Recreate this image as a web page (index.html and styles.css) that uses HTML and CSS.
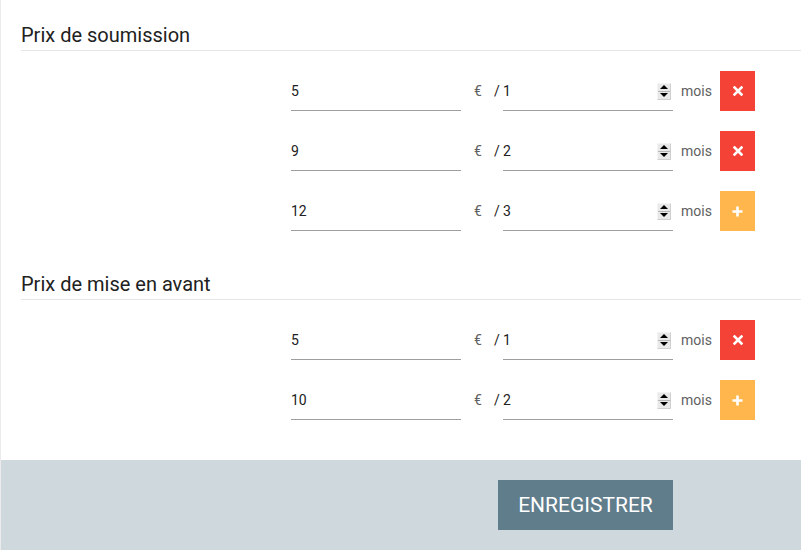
FILE: index.html
```html
<!DOCTYPE html>
<html lang="fr">
<head>
<meta charset="utf-8">
<link rel="stylesheet" href="styles.css">
</head>
<body>
<div class="page">
  <section class="section">
    <h2 class="section-title">Prix de soumission</h2>
    <div class="row">
      <div class="field"><input class="field-input" type="text" value="5"></div>
      <span class="currency">€</span>
      <span class="slash">/</span>
      <div class="field"><input class="field-input" type="text" value="1"><span class="spin"><span class="spin-up"></span><span class="spin-down"></span></span></div>
      <span class="unit">mois</span>
      <button class="btn-icon btn-remove" type="button"><svg width="10" height="10" viewBox="0 0 10 10"><path d="M1.5 1.5 8.5 8.5M8.5 1.5 1.5 8.5" stroke="#fff" stroke-width="2.6" stroke-linecap="square"/></svg></button>
    </div>
    <div class="row">
      <div class="field"><input class="field-input" type="text" value="9"></div>
      <span class="currency">€</span>
      <span class="slash">/</span>
      <div class="field"><input class="field-input" type="text" value="2"><span class="spin"><span class="spin-up"></span><span class="spin-down"></span></span></div>
      <span class="unit">mois</span>
      <button class="btn-icon btn-remove" type="button"><svg width="10" height="10" viewBox="0 0 10 10"><path d="M1.5 1.5 8.5 8.5M8.5 1.5 1.5 8.5" stroke="#fff" stroke-width="2.6" stroke-linecap="square"/></svg></button>
    </div>
    <div class="row">
      <div class="field"><input class="field-input" type="text" value="12"></div>
      <span class="currency">€</span>
      <span class="slash">/</span>
      <div class="field"><input class="field-input" type="text" value="3"><span class="spin"><span class="spin-up"></span><span class="spin-down"></span></span></div>
      <span class="unit">mois</span>
      <button class="btn-icon btn-add" type="button"><svg width="11" height="11" viewBox="0 0 11 11"><path d="M5.5 0.5V10.5M0.5 5.5H10.5" stroke="#fff" stroke-width="2.6"/></svg></button>
    </div>
  </section>
  <section class="section">
    <h2 class="section-title">Prix de mise en avant</h2>
    <div class="row">
      <div class="field"><input class="field-input" type="text" value="5"></div>
      <span class="currency">€</span>
      <span class="slash">/</span>
      <div class="field"><input class="field-input" type="text" value="1"><span class="spin"><span class="spin-up"></span><span class="spin-down"></span></span></div>
      <span class="unit">mois</span>
      <button class="btn-icon btn-remove" type="button"><svg width="10" height="10" viewBox="0 0 10 10"><path d="M1.5 1.5 8.5 8.5M8.5 1.5 1.5 8.5" stroke="#fff" stroke-width="2.6" stroke-linecap="square"/></svg></button>
    </div>
    <div class="row">
      <div class="field"><input class="field-input" type="text" value="10"></div>
      <span class="currency">€</span>
      <span class="slash">/</span>
      <div class="field"><input class="field-input" type="text" value="2"><span class="spin"><span class="spin-up"></span><span class="spin-down"></span></span></div>
      <span class="unit">mois</span>
      <button class="btn-icon btn-add" type="button"><svg width="11" height="11" viewBox="0 0 11 11"><path d="M5.5 0.5V10.5M0.5 5.5H10.5" stroke="#fff" stroke-width="2.6"/></svg></button>
    </div>
  </section>
  <footer class="footer">
    <button class="btn-save" type="button">ENREGISTRER</button>
  </footer>
</div>
</body>
</html>
```

FILE: styles.css
```css
* { box-sizing: border-box; }
html, body { margin: 0; padding: 0; background: #fff; }
body { font-family: Roboto, "Liberation Sans", sans-serif; color: #212121; }

.page {
  border-left: 1px solid #ebebeb;
  min-height: 550px;
  display: flex;
  flex-direction: column;
}

.section { padding-left: 20px; }
.section + .section { margin-top: 18px; }

.section-title {
  margin: 0;
  height: 51px;
  padding-top: 23px;
  font-size: 20px;
  line-height: 24px;
  font-weight: 400;
  color: #212121;
  border-bottom: 1px solid #e6e6e6;
}

.row {
  display: flex;
  align-items: stretch;
  height: 40px;
  margin-top: 20px;
  padding-left: 270px;
}

.field {
  width: 170px;
  display: flex;
  align-items: center;
  border-bottom: 1px solid #9e9e9e;
}
.field-input {
  border: 0;
  outline: 0;
  padding: 0;
  margin: 0;
  width: 100%;
  font-family: Roboto, "Liberation Sans", sans-serif;
  font-size: 14px;
  color: #212121;
  background: transparent;
  height: 20px;
  margin-top: 1px;
}

.currency {
  margin-left: 13px;
  width: 20px;
  display: flex;
  align-items: center;
  font-size: 14px;
  color: #616161;
}
.slash {
  width: 9px;
  display: flex;
  align-items: center;
  font-size: 14px;
  color: #212121;
}

.spin {
  flex: none;
  width: 14px;
  height: 17px;
  margin-right: 2px;
  margin-top: 1px;
  display: flex;
  flex-direction: column;
  background: #e9e9e9;
  border: 1px solid #f4f4f4;
  border-right-color: #d0d0d0;
  border-bottom-color: #d0d0d0;
}
.spin-up, .spin-down {
  flex: 1;
  display: flex;
  align-items: center;
  justify-content: center;
}
.spin-up { border-bottom: 1px solid #b5b5b5; }
.spin-up::before {
  content: "";
  border-left: 4px solid transparent;
  border-right: 4px solid transparent;
  border-bottom: 4px solid #000;
}
.spin-down::before {
  content: "";
  border-left: 4px solid transparent;
  border-right: 4px solid transparent;
  border-top: 4px solid #000;
}

.unit {
  margin-left: 8px;
  width: 39px;
  display: flex;
  align-items: center;
  font-size: 14px;
  color: #616161;
}

.btn-icon {
  width: 35px;
  height: 40px;
  border: 0;
  padding: 0;
  display: flex;
  align-items: center;
  justify-content: center;
  cursor: pointer;
}
.btn-remove { background: #f44336; }
.btn-add { background: #ffb74d; }

.footer {
  margin-top: 40px;
  flex: 1;
  background: #cfd8dc;
  padding: 20px 0 20px 497px;
}
.btn-save {
  width: 175px;
  height: 50px;
  border: 0;
  background: #607d8b;
  color: #fff;
  font-family: Roboto, "Liberation Sans", sans-serif;
  font-size: 21px;
  font-weight: 400;
  padding: 0;
}
```
